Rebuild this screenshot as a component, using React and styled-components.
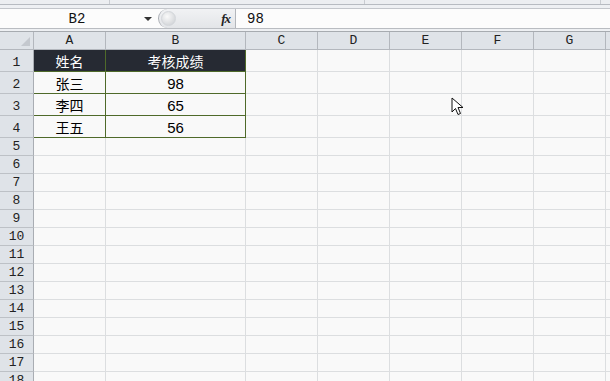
import React from 'react';
import styled, { createGlobalStyle } from 'styled-components';

const GlobalStyle = createGlobalStyle`
    html, body {
        margin: 0;
        padding: 0;
        background: #f9f9f9;
        overflow: hidden;
    }
`;

const Page = styled.div`
    position: relative;
    width: 610px;
    height: 381px;
    overflow: hidden;
    background: #f9f9f9;
    font-family: "Liberation Mono", "DejaVu Sans Mono", monospace;
`;

const TopStrip = styled.div`
    display: grid;
    grid-template-columns: 110px 255px 236px 1fr;
    height: 4px;
    background: #eceef1;
    border-bottom: 1px solid #b7bbc1;
`;

const StripCell = styled.div`
    border-right: 1px solid #c9ccd1;
`;

const FormulaArea = styled.div`
    padding-top: 3px;
    background: #eef0f3;
`;

const FormulaBox = styled.div`
    display: flex;
    align-items: center;
    height: 19px;
    background: #fcfcfc;
    border-top: 1px solid #c3c6cb;
    border-bottom: 1px solid #b9bcc1;
`;

const NameBox = styled.div`
    display: flex;
    align-items: center;
    width: 158px;
    height: 100%;
    box-sizing: border-box;
`;

const NameText = styled.div`
    flex: 1;
    text-align: center;
    font-size: 14px;
    color: #111;
    padding-left: 10px;
`;

const DropArrow = styled.div`
    width: 0;
    height: 0;
    margin-right: 6px;
    border-left: 4px solid transparent;
    border-right: 4px solid transparent;
    border-top: 4px solid #333;
`;

const Pill = styled.div`
    display: flex;
    align-items: center;
    justify-content: space-between;
    width: 78px;
    height: 19px;
    box-sizing: border-box;
    padding: 0 5px 0 2px;
    background: linear-gradient(#f1f2f4, #e3e5e8);
    border-left: 1px solid #a9adb3;
    border-radius: 10px 0 0 10px;
    border-right: 1px solid #b3b6bb;
`;

const Knob = styled.div`
    width: 13px;
    height: 13px;
    border-radius: 50%;
    background: radial-gradient(circle at 40% 35%, #fafafa, #c9ccd0);
    border: 1px solid #d3d6da;
`;

const Fx = styled.span`
    font-family: "Liberation Serif", serif;
    font-style: italic;
    font-weight: bold;
    font-size: 13px;
    color: #222;
    letter-spacing: -1px;
`;

const FormulaValue = styled.div`
    padding-left: 11px;
    font-size: 14px;
    color: #111;
`;

const HeaderGap = styled.div`
    height: 2px;
    background: #eef0f3;
    border-bottom: 1px solid #a7abb0;
`;

const Grid = styled.div`
    display: flex;
    flex-direction: column;
`;

const Row = styled.div`
    display: grid;
    grid-template-columns: 34px 72px 140px repeat(6, 72px) 72px;
    height: ${p => p.h}px;
`;

const Corner = styled.div`
    position: relative;
    background: #dfe3e8;
    border-right: 1px solid #b3b7bd;
    border-bottom: 1px solid #b3b7bd;
    &::after {
        content: "";
        position: absolute;
        right: 3px;
        bottom: 3px;
        width: 0;
        height: 0;
        border-left: 9px solid transparent;
        border-bottom: 9px solid #c4c8ce;
    }
`;

const ColHead = styled.div`
    display: flex;
    align-items: center;
    justify-content: center;
    background: #dfe3e8;
    border-right: 1px solid #b3b7bd;
    border-bottom: 1px solid #b3b7bd;
    font-size: 13px;
    color: #222;
`;

const RowHead = styled.div`
    display: flex;
    align-items: flex-end;
    justify-content: center;
    padding-bottom: 1px;
    box-sizing: border-box;
    background: #dfe3e8;
    border-right: 1px solid #a9adb3;
    border-bottom: 1px solid #bdc1c6;
    font-size: 13px;
    color: #222;
`;

const Cell = styled.div`
    display: flex;
    align-items: center;
    justify-content: center;
    box-sizing: border-box;
    background: ${p => (p.dark ? '#262a33' : '#f9f9f9')};
    color: ${p => (p.dark ? '#ffffff' : '#000000')};
    border-right: 1px solid ${p => (p.table ? '#4f6a2a' : '#dcdee0')};
    border-bottom: 1px solid ${p => (p.table ? '#4f6a2a' : '#dcdee0')};
    font-family: "Noto Sans CJK SC", "Noto Sans", sans-serif;
    font-size: 14px;
    padding-top: 1px;
`;

const Num = styled.span`
    font-family: "Liberation Sans", "Noto Sans", sans-serif;
    font-size: 15px;
`;

const Cursor = styled.svg`
    position: absolute;
    left: 451px;
    top: 97px;
`;

const cols = ['A', 'B', 'C', 'D', 'E', 'F', 'G', ''];
const data = [
    ['姓名', '考核成绩'],
    ['张三', '98'],
    ['李四', '65'],
    ['王五', '56'],
];

const App = () => {
    const rows = [];
    for (let r = 1; r <= 19; r++) {
        const h = r <= 4 ? 22 : 18;
        const rec = data[r - 1];
        rows.push(
            <Row key={r} h={h}>
                <RowHead>{r}</RowHead>
                {cols.map((c, i) => {
                    if (rec && i < 2) {
                        const txt = rec[i];
                        const isNum = /^\d+$/.test(txt);
                        return (
                            <Cell key={i} table dark={r === 1}>
                                {isNum ? <Num>{txt}</Num> : txt}
                            </Cell>
                        );
                    }
                    return <Cell key={i} />;
                })}
            </Row>
        );
    }

    return (
        <Page>
            <GlobalStyle />
            <TopStrip>
                <StripCell />
                <StripCell />
                <StripCell />
                <div />
            </TopStrip>
            <FormulaArea>
                <FormulaBox>
                    <NameBox>
                        <NameText>B2</NameText>
                        <DropArrow />
                    </NameBox>
                    <Pill>
                        <Knob />
                        <Fx>fx</Fx>
                    </Pill>
                    <FormulaValue>98</FormulaValue>
                </FormulaBox>
            </FormulaArea>
            <HeaderGap />
            <Grid>
                <Row h={18}>
                    <Corner />
                    {cols.map((c, i) => <ColHead key={i}>{c}</ColHead>)}
                </Row>
                {rows}
            </Grid>
            <Cursor width="14" height="20" viewBox="0 0 14 20">
                <path d="M1 1 L1 15 L4.5 11.5 L7 17.5 L9.5 16.5 L7 10.5 L12 10.5 Z" fill="#fff" stroke="#111" strokeWidth="1" strokeLinejoin="miter" />
            </Cursor>
        </Page>
    );
};

export default App;
